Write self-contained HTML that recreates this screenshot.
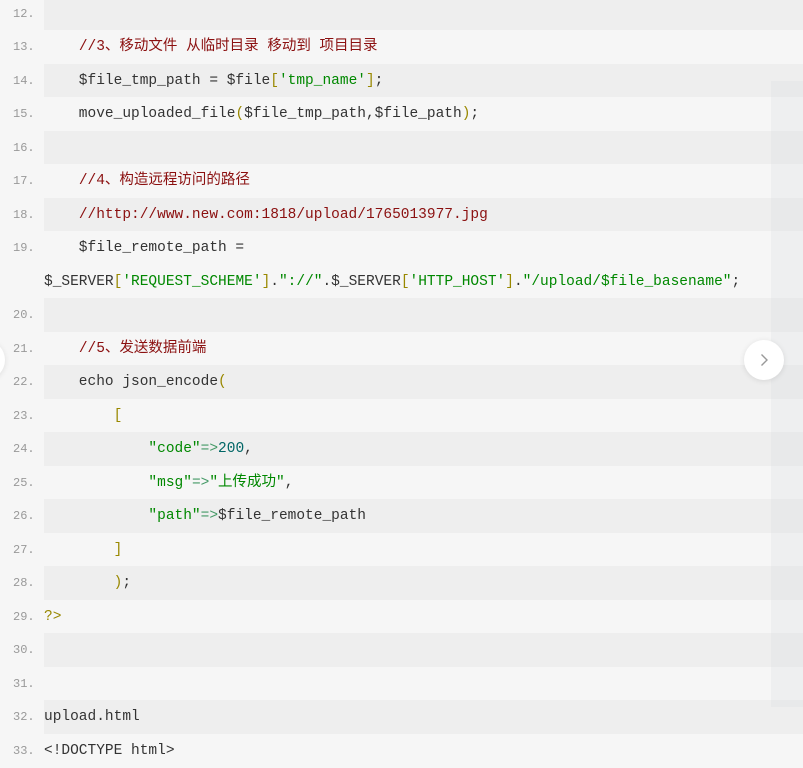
<!DOCTYPE html>
<html><head><meta charset="utf-8"><style>
html,body{margin:0;padding:0;width:803px;height:768px;overflow:hidden;background:#f6f6f6;position:relative}
.r{position:absolute;left:0;width:803px;line-height:35px;font-family:"Liberation Mono","Noto Sans CJK SC",monospace;font-size:14.5px;color:#333;white-space:pre}
.r .n{position:absolute;left:13px;top:0;color:#999;font-size:12px}
.r .c{position:absolute;left:44px;right:0;top:0;bottom:0;padding-left:0}
.g .c{background:#eeeeee}
.cm{color:#8b1010}.s{color:#008800}.p{color:#998800}.num{color:#006666}.o{color:#449966}
#panel{position:absolute;left:771px;top:81px;width:32px;height:626px;background:rgba(215,219,223,0.25)}
#btn{position:absolute;left:744px;top:340px;width:40px;height:40px;border-radius:50%;background:#fff;box-shadow:0 1px 6px rgba(0,0,0,0.1)}
#lb{position:absolute;left:-35px;top:340px;width:40px;height:40px;border-radius:50%;background:#fff;box-shadow:0 1px 6px rgba(0,0,0,0.1)}
</style></head><body>
<div class="r g" style="top:-3.5px;height:33.5px"><span class="n">12.</span><div class="c"></div></div>
<div class="r" style="top:30px;height:33.5px"><span class="n">13.</span><div class="c">    <span class="cm">//3、移动文件 从临时目录 移动到 项目目录</span></div></div>
<div class="r g" style="top:63.5px;height:33.5px"><span class="n">14.</span><div class="c">    $file_tmp_path = $file<span class="p">[</span><span class="s">'tmp_name'</span><span class="p">]</span>;</div></div>
<div class="r" style="top:97px;height:33.5px"><span class="n">15.</span><div class="c">    move_uploaded_file<span class="p">(</span>$file_tmp_path,$file_path<span class="p">)</span>;</div></div>
<div class="r g" style="top:130.5px;height:33.5px"><span class="n">16.</span><div class="c"></div></div>
<div class="r" style="top:164px;height:33.5px"><span class="n">17.</span><div class="c">    <span class="cm">//4、构造远程访问的路径</span></div></div>
<div class="r g" style="top:197.5px;height:33.5px"><span class="n">18.</span><div class="c">    <span class="cm">//http://www.new.com:1818/upload/1765013977.jpg</span></div></div>
<div class="r" style="top:231px;height:67px;line-height:33.5px;padding-top:1px"><span class="n" style="top:1px">19.</span><div class="c" style="top:1px">    $file_remote_path =
$_SERVER<span class="p">[</span><span class="s">'REQUEST_SCHEME'</span><span class="p">]</span>.<span class="s">"://"</span>.$_SERVER<span class="p">[</span><span class="s">'HTTP_HOST'</span><span class="p">]</span>.<span class="s">"/upload/$file_basename"</span>;</div></div>
<div class="r g" style="top:298px;height:33.5px"><span class="n">20.</span><div class="c"></div></div>
<div class="r" style="top:331.5px;height:33.5px"><span class="n">21.</span><div class="c">    <span class="cm">//5、发送数据前端</span></div></div>
<div class="r g" style="top:365px;height:33.5px"><span class="n">22.</span><div class="c">    echo json_encode<span class="p">(</span></div></div>
<div class="r" style="top:398.5px;height:33.5px"><span class="n">23.</span><div class="c">        <span class="p">[</span></div></div>
<div class="r g" style="top:432px;height:33.5px"><span class="n">24.</span><div class="c">            <span class="s">"code"</span><span class="o">=&gt;</span><span class="num">200</span>,</div></div>
<div class="r" style="top:465.5px;height:33.5px"><span class="n">25.</span><div class="c">            <span class="s">"msg"</span><span class="o">=&gt;</span><span class="s">"上传成功"</span>,</div></div>
<div class="r g" style="top:499px;height:33.5px"><span class="n">26.</span><div class="c">            <span class="s">"path"</span><span class="o">=&gt;</span>$file_remote_path</div></div>
<div class="r" style="top:532.5px;height:33.5px"><span class="n">27.</span><div class="c">        <span class="p">]</span></div></div>
<div class="r g" style="top:566px;height:33.5px"><span class="n">28.</span><div class="c">        <span class="p">)</span>;</div></div>
<div class="r" style="top:599.5px;height:33.5px"><span class="n">29.</span><div class="c"><span class="p">?&gt;</span></div></div>
<div class="r g" style="top:633px;height:33.5px"><span class="n">30.</span><div class="c"></div></div>
<div class="r" style="top:666.5px;height:33.5px"><span class="n">31.</span><div class="c"></div></div>
<div class="r g" style="top:700px;height:33.5px"><span class="n">32.</span><div class="c">upload.html</div></div>
<div class="r" style="top:733.5px;height:34.5px"><span class="n">33.</span><div class="c">&lt;!DOCTYPE html&gt;</div></div>
<div id="panel"></div>
<div id="lb"></div>
<div id="btn"><svg width="40" height="40" viewBox="0 0 40 40"><path d="M17.5 14.5 L23 20 L17.5 25.5" fill="none" stroke="#999" stroke-width="1.4"/></svg></div>
</body></html>
